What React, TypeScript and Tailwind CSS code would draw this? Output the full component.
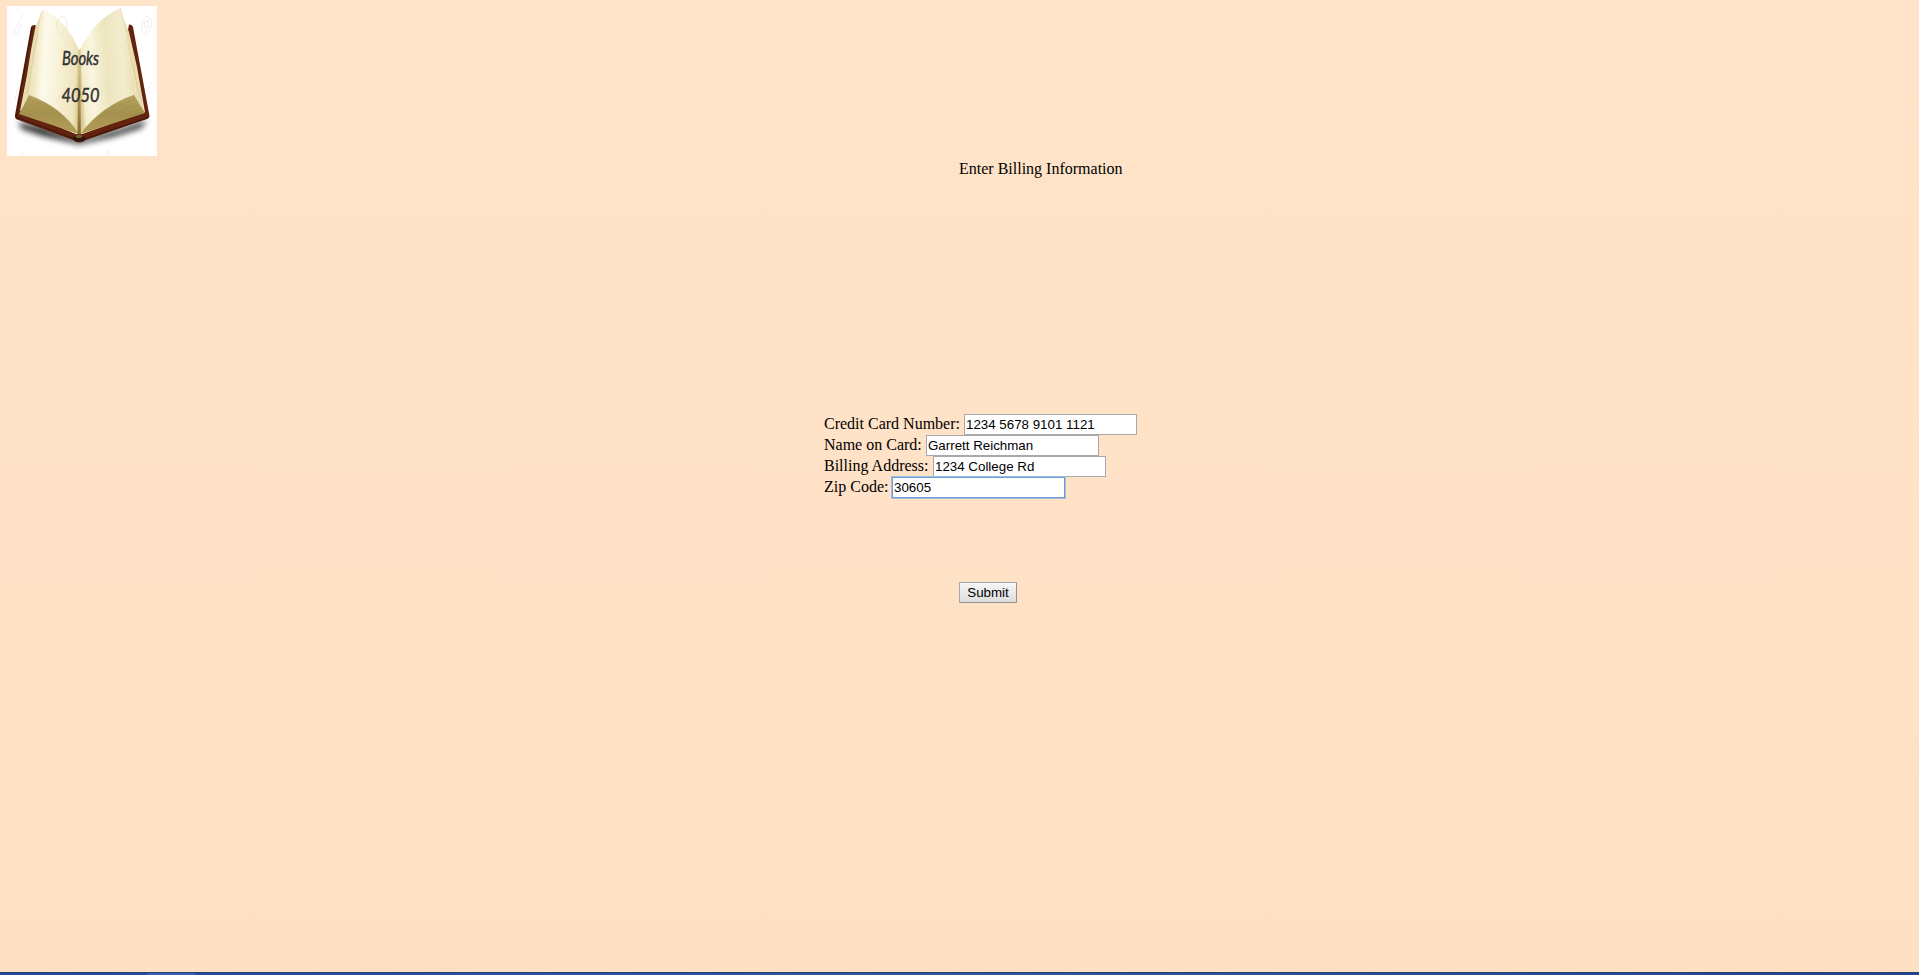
import React from "react";

type Field = { label: string; value: string; labelWidth: string; focused?: boolean };

const fields: Field[] = [
  { label: "Credit Card Number:", value: "1234 5678 9101 1121", labelWidth: "w-[140px]" },
  { label: "Name on Card:", value: "Garrett Reichman", labelWidth: "w-[102px]" },
  { label: "Billing Address:", value: "1234 College Rd", labelWidth: "w-[109px]" },
  { label: "Zip Code:", value: "30605", labelWidth: "w-[68px]", focused: true },
];

function BookLogo() {
  return (
    <svg width="150" height="150" viewBox="7 6 150 150" className="block">
      <defs>
        <linearGradient id="leftPage" x1="0" y1="0.3" x2="1" y2="0.45">
          <stop offset="0" stopColor="#eee3b8" />
          <stop offset="0.14" stopColor="#f0e8c4" />
          <stop offset="0.3" stopColor="#fdfaea" />
          <stop offset="0.6" stopColor="#f7f1d6" />
          <stop offset="0.93" stopColor="#eee5bd" />
          <stop offset="1" stopColor="#e0d29c" />
        </linearGradient>
        <linearGradient id="rightPage" x1="0" y1="0.5" x2="1" y2="0.35">
          <stop offset="0" stopColor="#dccb91" />
          <stop offset="0.06" stopColor="#f4edcd" />
          <stop offset="0.22" stopColor="#faf5df" />
          <stop offset="0.5" stopColor="#ede5bd" />
          <stop offset="0.78" stopColor="#f3edcf" />
          <stop offset="1" stopColor="#eadfb5" />
        </linearGradient>
        <linearGradient id="edge" x1="0" y1="0" x2="0" y2="1">
          <stop offset="0" stopColor="#b3a05c" />
          <stop offset="0.5" stopColor="#a6924f" />
          <stop offset="1" stopColor="#b8a35c" />
        </linearGradient>
        <linearGradient id="spine" x1="0" y1="0" x2="0" y2="1">
          <stop offset="0" stopColor="#e0d19c" />
          <stop offset="0.6" stopColor="#bda563" />
          <stop offset="1" stopColor="#806733" />
        </linearGradient>
        <filter id="soft" x="-20%" y="-60%" width="140%" height="220%">
          <feGaussianBlur stdDeviation="3.2" />
        </filter>
      </defs>
      <rect x="7" y="6" width="150" height="150" fill="#fff" />
      <g fill="none" stroke="#f0f0f0" strokeWidth="1">
        <path d="M12 36l10-20 3-3M13 32l4 4 5-12M16 24l6 2" />
        <path d="M142 20l5-4 5 4-1 8-6 7-3-4zM144 22l4-1 1 5-4 2z" />
        <path d="M15 101l2-12 5-4M147 91l5-9M21 155l3-4M106 155l2-5v5" />
      </g>
      <path d="M18 122L42 127L77 139H83L120 129L147 120L141 128L112 137L79 144L43 136L22 129Z" fill="#000" opacity="0.85" filter="url(#soft)" />
      <path d="M31 27Q32 24.500 35.500 25L36 30L24 112L76 134H82L140 112L128 30L129 24.500Q132 24 133 27L149.500 116Q149.500 118 147 119L86 140Q79 145 73 140L17 119.500Q14.500 118 15 115Z" fill="#64230f" />
      <path d="M32 27L16 117L76 139.500H83L148.500 117.500" fill="none" stroke="#38170d" strokeWidth="1" />
      <path d="M42 10L35 29L31 50L27 75L20 111L76 134L79 90L79 51Q66 19 42 10Z" fill="#e9ddb2" />
      <path d="M121 8L124 20L129 32L137 67L145 112L82 134L80 51Q95 19 121 8Z" fill="#e9ddb2" />
      <path d="M42 10Q66 19 79.500 51V134Q57 109 29 95L33 62Z" fill="url(#leftPage)" />
      <path d="M121 8Q95 19 79.500 50V134Q102 105 134 95L127 42Z" fill="url(#rightPage)" />
      <path d="M29 95Q62 107 79 134L19 114Q24 105 29 95Z" fill="url(#edge)" />
      <path d="M134 95Q103 105 80 134L145 113Q140 105 134 95Z" fill="url(#edge)" />
      <g fill="none" stroke="#897633" strokeWidth="0.35" opacity="0.5">
        <path d="M27 99Q58 109 77 133M25 103Q55 114 76 133M22 108Q51 117 74 132M20 111Q49 121 72 132" />
        <path d="M136 99Q106 109 82 133M139 104Q109 115 83 132M142 108Q113 118 85 132M144 111Q115 122 88 131" />
      </g>
      <g fill="none" stroke="#d9c999" strokeWidth="0.7">
        <path d="M38 34Q34 49 33 59L31 70 29 84 27 94" />
        <path d="M126 38l4 20 4 12 3 16 5 17" />
        <path d="M124 27l5 28 4 20 3 18" stroke="#f9f2d9" />
      </g>
      <path d="M78 51L79.300 49L80.800 51V134H77.500Z" fill="url(#spine)" />
      <path d="M79 90V132" stroke="#8c7336" strokeWidth="0.7" />
      <ellipse cx="79" cy="138.500" rx="6.500" ry="3.300" fill="#31140c" />
      <path d="M75 136Q79 133 83 136L81 138H77Z" fill="#6f5c2b" />
      <g fill="none" stroke="#e7dfbd" strokeWidth="1" opacity="0.6">
        <path d="M57 22q5-9 9-3l2 7-7 8-4-5zM97 34l10-16M102 91l5-6 3 7-4 8-5 4M55 104l7-11 6-5" />
      </g>
      <g fill="#303033" stroke="#303033" strokeWidth="0.45" strokeLinejoin="round" className="font-['Lato',sans-serif] italic">
        <text x="62" y="65" fontSize="20" textLength="37" lengthAdjust="spacingAndGlyphs">Books</text>
        <text x="61.500" y="101.500" fontSize="19" textLength="38" lengthAdjust="spacingAndGlyphs">4050</text>
      </g>
    </svg>
  );
}

export default function App() {
  return (
    <div className="flex h-[975px] w-full flex-col overflow-hidden bg-linear-to-b from-[#ffe4c9] to-[#ffe0c4] font-['Liberation_Serif',serif] text-[16px] leading-[18px] text-black">
      <header className="pt-[6px] pl-[7px]">
        <BookLogo />
      </header>
      <main className="flex-1">
        <h1 className="mt-[4px] ml-[959px]">Enter Billing Information</h1>
        <form onSubmit={(e) => e.preventDefault()}>
          <div className="mt-[236px] ml-[824px]">
            {fields.map((f) => (
              <label key={f.label} className="flex h-[21px] items-start">
                <span className={"shrink-0 pt-[1px] whitespace-nowrap " + f.labelWidth}>{f.label}</span>
                <input
                  defaultValue={f.value}
                  spellCheck={false}
                  className={
                    "h-[21px] w-[173px] border bg-white px-[1px] font-['Liberation_Sans',sans-serif] text-[13.333px] leading-[15px] outline-none " +
                    (f.focused ? "relative border-[#6b9bd4] shadow-[0_0_0_1px_#a5bfdf]" : "border-[#a9a9a9]")
                  }
                />
              </label>
            ))}
          </div>
          <button
            type="submit"
            className="mt-[84px] ml-[959px] block h-[21px] w-[58px] rounded-[1px] border border-[#a6a6a6] border-r-[#929292] border-b-[#929292] bg-linear-to-b from-[#f6f6f6] to-[#dddddd] font-['Liberation_Sans',sans-serif] text-[13.333px] leading-[18px]"
          >
            Submit
          </button>
        </form>
      </main>
      <footer className="flex h-[3px] border-t border-[#263f70] bg-linear-to-r from-[#234b98] via-[#3157a0] to-[#21448f]">
        <div className="ml-[147px] h-full w-[48px] bg-[#3560b5]" />
      </footer>
    </div>
  );
}
